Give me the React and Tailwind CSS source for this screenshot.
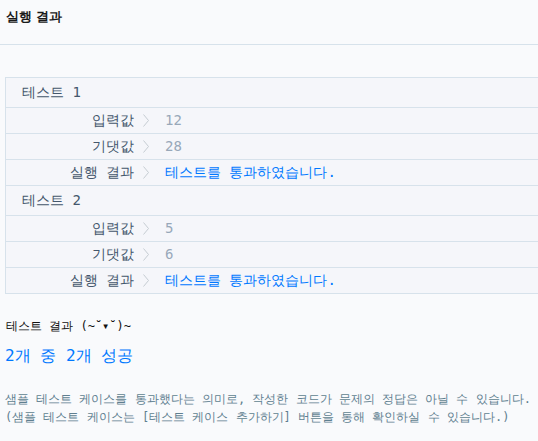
import React from 'react';

const tests = [
  { name: '테스트 1', input: '12', expected: '28' },
  { name: '테스트 2', input: '5', expected: '6' },
];

// generic monospace keeps Hangul at full 1em width, like the original page
const mono = { fontFamily: 'monospace' };

const Chevron = () => (
  <svg width="6" height="13" viewBox="0 0 6 13" className="ml-[9px] shrink-0">
    <polyline points="0.5,0.5 5.5,6.5 0.5,12.5" fill="none" stroke="#c5ccd3" strokeWidth="1" />
  </svg>
);

const Row = ({ label, children }) => (
  <div className="h-[26px] border-b border-[#d7e2eb] flex items-center text-[14px]">
    <div className="w-[128px] shrink-0 text-right text-[#44576c]">{label}</div>
    <Chevron />
    <div className="ml-[16px]">{children}</div>
  </div>
);

const App = () => {
  return (
    <div className="w-[538px] h-[441px] overflow-hidden bg-[#f9fafc]" style={mono}>
      <div className="h-[45px] border-b border-[#d7e2eb] px-[6px] pt-[8px]">
        <h2
          className="text-[13px] leading-[18px] font-bold text-[#1a1a1a]"
          style={{ fontFamily: 'sans-serif' }}
        >
          실행 결과
        </h2>
      </div>

      <div className="pt-[32px] pl-[5px]">
        <div className="w-[600px] border-t border-l border-[#d7e2eb] bg-[#f5f6fa]">
          {tests.map((t) => (
            <div key={t.name}>
              <div className="h-[30px] border-b border-[#d7e2eb] flex items-center pl-[16px] text-[14px] text-[#44576c]">
                {t.name}
              </div>
              <Row label="입력값">
                <span className="text-[#98a8b9]">{t.input}</span>
              </Row>
              <Row label="기댓값">
                <span className="text-[#98a8b9]">{t.expected}</span>
              </Row>
              <Row label="실행 결과">
                <span className="text-[#0078ff]">테스트를 통과하였습니다.</span>
              </Row>
            </div>
          ))}
        </div>

        <div className="mt-[23px] pl-[1px] text-[12px] leading-[18px] text-[#111]">
          테스트 결과 (~˘▾˘)~
        </div>
        <div className="mt-[9px] text-[16px] leading-[24px] text-[#0078ff]">
          2개 중 2개 성공
        </div>
        <div className="mt-[22px] text-[12px] leading-[18px] text-[#5f7f90] whitespace-nowrap">
          <p>샘플 테스트 케이스를 통과했다는 의미로, 작성한 코드가 문제의 정답은 아닐 수 있습니다.</p>
          <p>(샘플 테스트 케이스는 [테스트 케이스 추가하기] 버튼을 통해 확인하실 수 있습니다.)</p>
        </div>
      </div>
    </div>
  );
};

export default App;
